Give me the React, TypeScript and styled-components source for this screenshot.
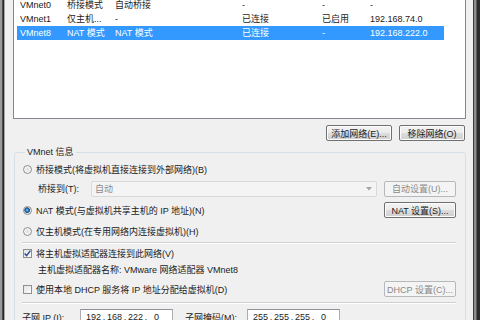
import React from 'react';
import styled, {createGlobalStyle} from "styled-components";

const Global = createGlobalStyle`
  html, body { margin: 0; padding: 0; background: #f0f0f0; }
`

type RowType = {
    cells: string[]
    selected?: boolean
}

const rows: RowType[] = [
    {cells: ['VMnet0', '桥接模式', '自动桥接', '-', '-', '-']},
    {cells: ['VMnet1', '仅主机...', '-', '已连接', '已启用', '192.168.74.0']},
    {cells: ['VMnet8', 'NAT 模式', 'NAT 模式', '已连接', '-', '192.168.222.0'], selected: true},
]

const colWidths = [46, 48, 127, 80, 48, 78]

const Radio = ({checked}: { checked?: boolean }) => <RadioBox $checked={checked}/>

const Check = ({checked}: { checked?: boolean }) => (
    <CheckBox>
        {checked && (
            <svg width="9" height="9" viewBox="0 0 9 9">
                <path d="M1.6 4.4 L3.6 6.6 L7.4 1.6" fill="none" stroke="#2b4f93" strokeWidth="1.5"/>
            </svg>
        )}
    </CheckBox>
)

const IpField = ({parts}: { parts: string[] }) => (
    <IpBox>
        {parts.map((p, i) => (
            <React.Fragment key={i}>
                {i > 0 && <Dot>.</Dot>}
                <Octet>{p}</Octet>
            </React.Fragment>
        ))}
    </IpBox>
)

export default function App() {
    return (
        <Frame>
            <Global/>
            <LeftEdge/>
            <Content>
                <List>
                    {rows.map((r, i) => (
                        <ListRow key={i} $selected={r.selected}>
                            {r.cells.map((c, j) => (
                                <Cell key={j} $w={colWidths[j]} $first={j === 0}>{c}</Cell>
                            ))}
                        </ListRow>
                    ))}
                </List>
                <ButtonRow>
                    <Button $w={66}>添加网络(E)...</Button>
                    <Button $w={66}>移除网络(O)</Button>
                </ButtonRow>
                <Group>
                    <Legend>VMnet 信息</Legend>
                    <OptionRow $mt={3}>
                        <Radio/>
                        <span>桥接模式(将虚拟机直接连接到外部网络)(B)</span>
                    </OptionRow>
                    <BridgeRow>
                        <FieldLabel $w={46}>桥接到(T):</FieldLabel>
                        <Select>
                            <span>自动</span>
                            <svg width="6" height="4" viewBox="0 0 6 4">
                                <polygon points="0,0 6,0 3,3.5" fill="#a6a6a6"/>
                            </svg>
                        </Select>
                        <Button $w={72} $disabled>自动设置(U)...</Button>
                    </BridgeRow>
                    <OptionRow $mt={5}>
                        <Radio checked/>
                        <span>NAT 模式(与虚拟机共享主机的 IP 地址)(N)</span>
                        <Spacer/>
                        <Button $w={72}>NAT 设置(S)...</Button>
                    </OptionRow>
                    <OptionRow $mt={5}>
                        <Radio/>
                        <span>仅主机模式(在专用网络内连接虚拟机)(H)</span>
                    </OptionRow>
                    <Separator $mt={3}/>
                    <OptionRow $mt={1}>
                        <Check checked/>
                        <span>将主机虚拟适配器连接到此网络(V)</span>
                    </OptionRow>
                    <IndentText>主机虚拟适配器名称: VMware 网络适配器 VMnet8</IndentText>
                    <OptionRow $mt={3}>
                        <Check/>
                        <span>使用本地 DHCP 服务将 IP 地址分配给虚拟机(D)</span>
                        <Spacer/>
                        <Button $w={72} $disabled>DHCP 设置(C)...</Button>
                    </OptionRow>
                    <Separator $mt={5}/>
                    <SubnetRow>
                        <FieldLabel $w={58}>子网 IP (I):</FieldLabel>
                        <IpField parts={['192', '168', '222', '0']}/>
                        <FieldLabel $w={62} $ml={5}>子网掩码(M):</FieldLabel>
                        <IpField parts={['255', '255', '255', '0']}/>
                    </SubnetRow>
                </Group>
            </Content>
            <RightEdge/>
        </Frame>
    );
}

const Frame = styled.div`
  display: flex;
  width: 480px;
  height: 320px;
  overflow: hidden;
  background: #f0f0f0;
  font-family: "Liberation Sans", "Noto Sans CJK SC", sans-serif;
  font-size: 9px;
  color: #1b1b1b;
`

const LeftEdge = styled.div`
  flex: none;
  width: 5px;
  background: linear-gradient(to right, #9a9a9a 0 2px, #4d4d4d 2px 3px, #262626 3px 4px, #a8a8a8 4px 5px);
`

const RightEdge = styled.div`
  flex: none;
  width: 7px;
  background: linear-gradient(to right, #3c3c3c 0 1px, #8d8d8d 1px 3px, #5a5a5a 3px 4px, #2c2c2c 4px 7px);
`

const Content = styled.div`
  flex: 1;
  min-width: 0;
  display: flex;
  flex-direction: column;
  padding: 0 7px 0 8px;
`

const List = styled.div`
  flex: none;
  margin-top: -3px;
  height: 122px;
  box-sizing: border-box;
  border: 1px solid #828790;
  background: #fff;
`

const ListRow = styled.div<{ $selected?: boolean }>`
  display: flex;
  width: 427px;
  height: 14px;
  line-height: 14px;
  margin-left: 3px;
  background: ${p => p.$selected ? '#3399ff' : 'transparent'};
  color: ${p => p.$selected ? '#fff' : '#1b1b1b'};
`

const Cell = styled.div<{ $w: number, $first?: boolean }>`
  flex: none;
  width: ${p => p.$w}px;
  box-sizing: border-box;
  padding-left: ${p => p.$first ? 3 : 4}px;
  white-space: nowrap;
  overflow: hidden;
`

const ButtonRow = styled.div`
  display: flex;
  justify-content: flex-end;
  gap: 7px;
  margin-top: 6px;
  padding-right: 1px;
`

const Button = styled.div<{ $w: number, $disabled?: boolean }>`
  flex: none;
  width: ${p => p.$w}px;
  height: 16px;
  box-sizing: border-box;
  display: flex;
  align-items: center;
  justify-content: center;
  white-space: nowrap;
  border-radius: 2px;
  border: 1px solid ${p => p.$disabled ? '#b5b9bc' : '#707070'};
  background: ${p => p.$disabled
    ? '#f4f4f4'
    : 'linear-gradient(#f3f3f3 0%, #ebebeb 50%, #dddddd 51%, #cfcfcf 100%)'};
  color: ${p => p.$disabled ? '#8a8a8a' : '#1b1b1b'};
  box-shadow: inset 0 0 0 1px ${p => p.$disabled ? '#f4f4f4' : '#fcfcfc'};
`

const Group = styled.fieldset`
  flex: none;
  margin: 6px 0 0 1px;
  padding: 0 9px 0 7px;
  min-width: 0;
  border: 1px solid #d5dfe5;
  border-radius: 3px;
  display: flex;
  flex-direction: column;
`

const Legend = styled.legend`
  margin-left: 3px;
  padding: 0 2px;
  line-height: 11px;
  font-size: 9px;
`

const OptionRow = styled.div<{ $mt: number }>`
  display: flex;
  align-items: center;
  gap: 4px;
  height: 16px;
  margin-top: ${p => p.$mt}px;
  white-space: nowrap;
`

const RadioBox = styled.span<{ $checked?: boolean }>`
  flex: none;
  width: 9px;
  height: 9px;
  margin-left: 1px;
  box-sizing: border-box;
  border-radius: 50%;
  border: 1px solid #8e8f8f;
  background: ${p => p.$checked
    ? 'radial-gradient(circle at 45% 45%, #8fd0ff 0, #2a83c9 1.3px, #1b4f86 2.6px, #e4e4e4 3px, #f7f7f7 100%)'
    : 'radial-gradient(circle at 50% 50%, #d9d9d9 0, #eeeeee 2px, #fbfbfb 100%)'};
`

const CheckBox = styled.span`
  flex: none;
  width: 9px;
  height: 9px;
  margin-left: 1px;
  box-sizing: border-box;
  border: 1px solid #8e8f8f;
  background: linear-gradient(135deg, #e4e4e4, #fbfbfb);
  display: flex;
  align-items: center;
  justify-content: center;

  svg {
    flex: none;
  }
`

const Spacer = styled.div`
  flex: 1;
`

const BridgeRow = styled.div`
  display: flex;
  align-items: center;
  gap: 7px;
  height: 17px;
  margin-top: 3px;
  padding-left: 16px;
`

const FieldLabel = styled.span<{ $w: number, $ml?: number }>`
  flex: none;
  width: ${p => p.$w}px;
  margin-left: ${p => p.$ml || 0}px;
  margin-right: -7px;
  white-space: nowrap;
`

const Select = styled.div`
  flex: 1;
  height: 16px;
  box-sizing: border-box;
  margin-left: 7px;
  display: flex;
  align-items: center;
  justify-content: space-between;
  padding: 0 4px 0 3px;
  border: 1px solid #d9d9d9;
  border-radius: 2px;
  background: #f4f4f4;
  color: #8a8a8a;
`

const Separator = styled.div<{ $mt: number }>`
  flex: none;
  margin-top: ${p => p.$mt}px;
  border-top: 1px solid #d0d0d0;
  border-bottom: 1px solid #fff;
`

const IndentText = styled.div`
  height: 16px;
  line-height: 16px;
  margin-top: 1px;
  padding-left: 16px;
  white-space: nowrap;
`

const SubnetRow = styled.div`
  display: flex;
  align-items: center;
  gap: 7px;
  height: 16px;
  margin-top: 5px;
`

const IpBox = styled.div`
  flex: none;
  width: 93px;
  height: 16px;
  box-sizing: border-box;
  display: flex;
  align-items: center;
  padding: 0 4px;
  border: 1px solid #abadb3;
  border-top-color: #8e9198;
  background: #fff;
`

const Octet = styled.span`
  width: 17px;
  text-align: center;
`

const Dot = styled.span`
  width: 4px;
  text-align: center;
`
